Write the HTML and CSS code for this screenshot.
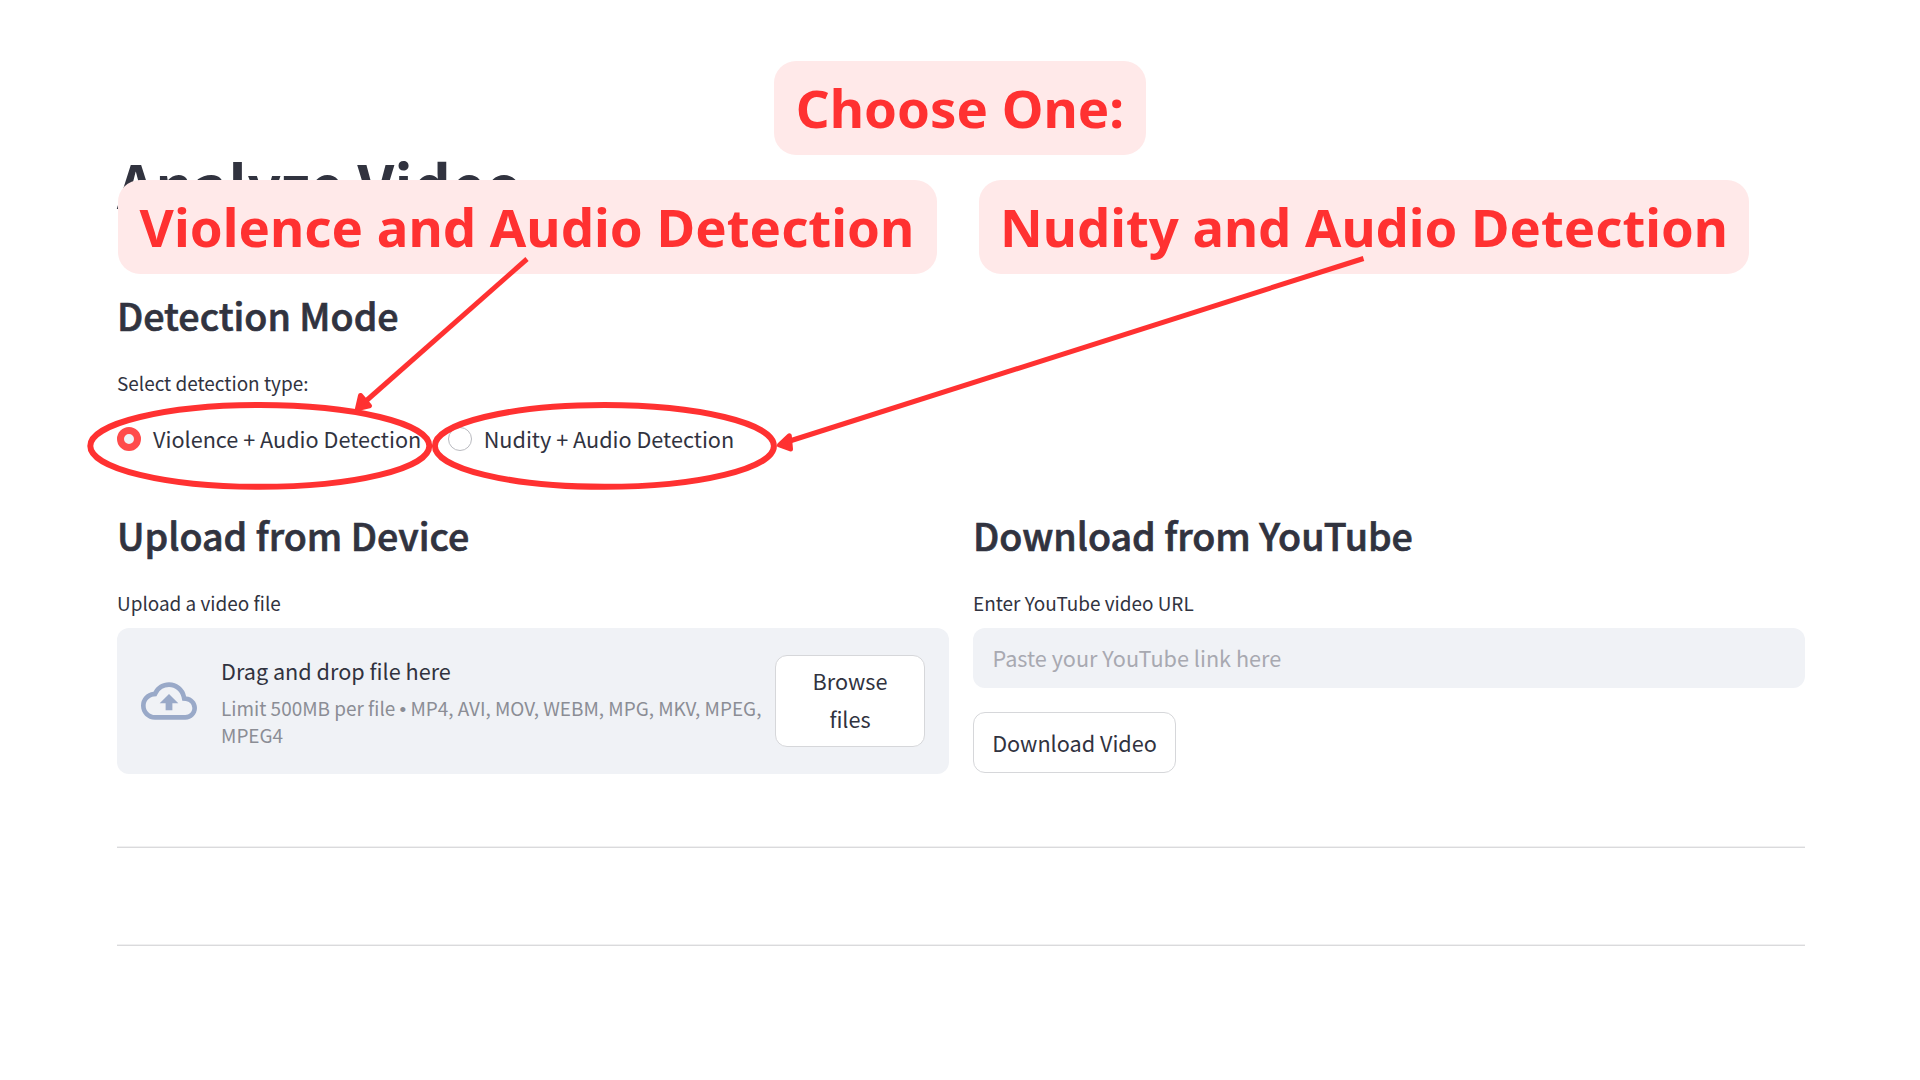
FILE: index.html
```
<!DOCTYPE html>
<html lang="en">
<head>
<meta charset="utf-8">
<title>Analyze Video</title>
<link rel="stylesheet" href="styles.css">
</head>
<body>
<main class="page">
  <h1 class="title">Analyze Video</h1>

  <section class="mode">
    <h2 class="heading">Detection Mode</h2>
    <div class="label">Select detection type:</div>
    <div class="radios">
      <label class="radio"><span class="dot dot-on"></span><span>Violence + Audio Detection</span></label>
      <label class="radio"><span class="dot"></span><span>Nudity + Audio Detection</span></label>
    </div>
  </section>

  <div class="columns">
    <section>
      <h2 class="heading">Upload from Device</h2>
      <div class="label">Upload a video file</div>
      <div class="dropzone">
        <svg class="cloud" viewBox="0 0 24 24"><path d="M19.35 10.04A7.49 7.49 0 0 0 12 4C9.11 4 6.6 5.64 5.35 8.04A5.994 5.994 0 0 0 0 14c0 3.31 2.69 6 6 6h13c2.76 0 5-2.24 5-5 0-2.64-2.05-4.78-4.65-4.96zM19 18H6c-2.21 0-4-1.79-4-4 0-2.05 1.53-3.76 3.56-3.97l1.07-.11.5-.95A5.469 5.469 0 0 1 12 6c2.62 0 4.88 1.86 5.39 4.43l.3 1.5 1.53.11A2.98 2.98 0 0 1 22 15c0 1.65-1.35 3-3 3zM8 13h2.55v3h2.9v-3H16l-4-4z"/></svg>
        <div class="drop-text">
          <div class="drop-title">Drag and drop file here</div>
          <div class="drop-limit">Limit 500MB per file <span class="bullet">•</span> MP4, AVI, MOV, WEBM, MPG, MKV, MPEG,<br>MPEG4</div>
        </div>
        <button class="button browse">Browse<br>files</button>
      </div>
    </section>
    <section>
      <h2 class="heading">Download from YouTube</h2>
      <div class="label">Enter YouTube video URL</div>
      <input class="url" type="text" placeholder="Paste your YouTube link here">
      <button class="button download">Download Video</button>
    </section>
  </div>

  <hr class="rule">
  <hr class="rule">
</main>

<div class="callout callout-choose">Choose One:</div>
<div class="callout callout-violence">Violence and Audio Detection</div>
<div class="callout callout-nudity">Nudity and Audio Detection</div>

<svg class="marks" viewBox="0 0 1920 1080">
  <ellipse cx="259.8" cy="445.9" rx="169.5" ry="40.9"/>
  <ellipse cx="604.4" cy="445.9" rx="169.5" ry="40.9"/>
  <path class="shaft" d="M527 259 362 404.500"/>
  <path class="shaft" d="M1363.500 258.500 785 442.500"/>
  <path class="head" d="M360.500 395.500 369.500 405.800 357.500 408.500z"/>
  <path class="head" d="M789.300 435.800 790.500 449 779.500 445z"/>
</svg>
</body>
</html>
```

FILE: styles.css
```
* { box-sizing: border-box; }

body {
  margin: 0;
  background: #fff;
  color: #31333f;
  font-family: "Noto Sans CJK SC", "Noto Sans", sans-serif;
  font-size: 21.65px;
}

.page {
  width: 1920px;
  height: 1080px;
  padding: 143px 115px 0 117px;
  overflow: hidden;
}

.title {
  margin: 0;
  height: 80px;
  font-size: 59.2px;
  font-weight: 700;
  letter-spacing: 0.2px;
  line-height: 80px;
}

.mode { padding-top: 66px; }

.heading {
  margin: 0 0 26px;
  height: 52px;
  font-size: 37.6px;
  font-weight: 500;
  line-height: 52px;
  -webkit-text-stroke: 0.7px #31333f;
}

.label {
  height: 32px;
  font-size: 18.95px;
  line-height: 32px;
}

.radios {
  display: flex;
  gap: 26.5px;
  height: 36px;
  margin-top: 22px;
}

.radio {
  display: flex;
  align-items: center;
  gap: 12px;
  line-height: 36px;
}

.dot {
  width: 24px;
  height: 24px;
  border: 1.5px solid #b9babf;
  border-radius: 50%;
}

.dot-on {
  border: 7px solid #ff4b4b;
  background: #f0f2f6;
}

.columns {
  display: grid;
  grid-template-columns: 1fr 1fr;
  gap: 24px;
  height: 286px;
  margin-top: 52px;
}

.dropzone {
  display: flex;
  align-items: center;
  height: 146px;
  margin-top: 9px;
  padding: 0 24px;
  border-radius: 12px;
  background: #f0f2f6;
}

.cloud {
  width: 56px;
  height: 56px;
  margin-right: 24px;
  fill: #99a9c8;
}

.drop-text { flex: 1; white-space: nowrap; }

.drop-title { line-height: 35px; }

.drop-limit {
  padding-top: 7px;
  color: #8b8d95;
  font-size: 18.95px;
  line-height: 26.6px;
}

.bullet {
  font-family: "Liberation Sans", sans-serif;
  line-height: 1;
}

.button {
  padding: 0;
  border: 1.5px solid #d6d7da;
  border-radius: 12px;
  background: #fff;
  color: #31333f;
  font-family: inherit;
  font-size: 21.65px;
}

.browse {
  width: 150px;
  height: 92px;
  padding-bottom: 2px;
  line-height: 38.5px;
}

.url {
  display: block;
  width: 100%;
  height: 60px;
  margin-top: 9px;
  padding: 0 19px 2px 19.5px;
  border: 0;
  border-radius: 12px;
  background: #f0f2f6;
  font-family: inherit;
  font-size: 21.65px;
}

.url::placeholder { color: #a8a9b1; }

.download {
  display: block;
  width: 203px;
  height: 61px;
  margin-top: 24px;
  padding-bottom: 1px;
}

.rule {
  height: 2px;
  margin: 51px 0 0;
  border: 0;
  border-top: 1px solid #f0f0f1;
  border-bottom: 1px solid #dadadc;
}

.rule + .rule { margin-top: 96px; }

.callout {
  position: absolute;
  height: 94px;
  border-radius: 22px;
  background: #ffe9e9;
  color: #ff3131;
  font-family: "Noto Sans", sans-serif;
  font-size: 52.8px;
  font-weight: 700;
  line-height: 94px;
  text-align: center;
  white-space: nowrap;
}

.callout-choose { left: 774px; top: 60.5px; width: 372px; }
.callout-violence { left: 117.5px; top: 179.5px; width: 819px; }
.callout-nudity { left: 979px; top: 179.5px; width: 770px; font-size: 52.6px; }

.marks {
  position: absolute;
  left: 0;
  top: 0;
  width: 1920px;
  height: 1080px;
  fill: none;
  stroke: #ff3131;
  stroke-width: 6;
}

.shaft { stroke-width: 5; }

.head {
  fill: #ff3131;
  stroke-width: 5;
  stroke-linejoin: round;
}
```
